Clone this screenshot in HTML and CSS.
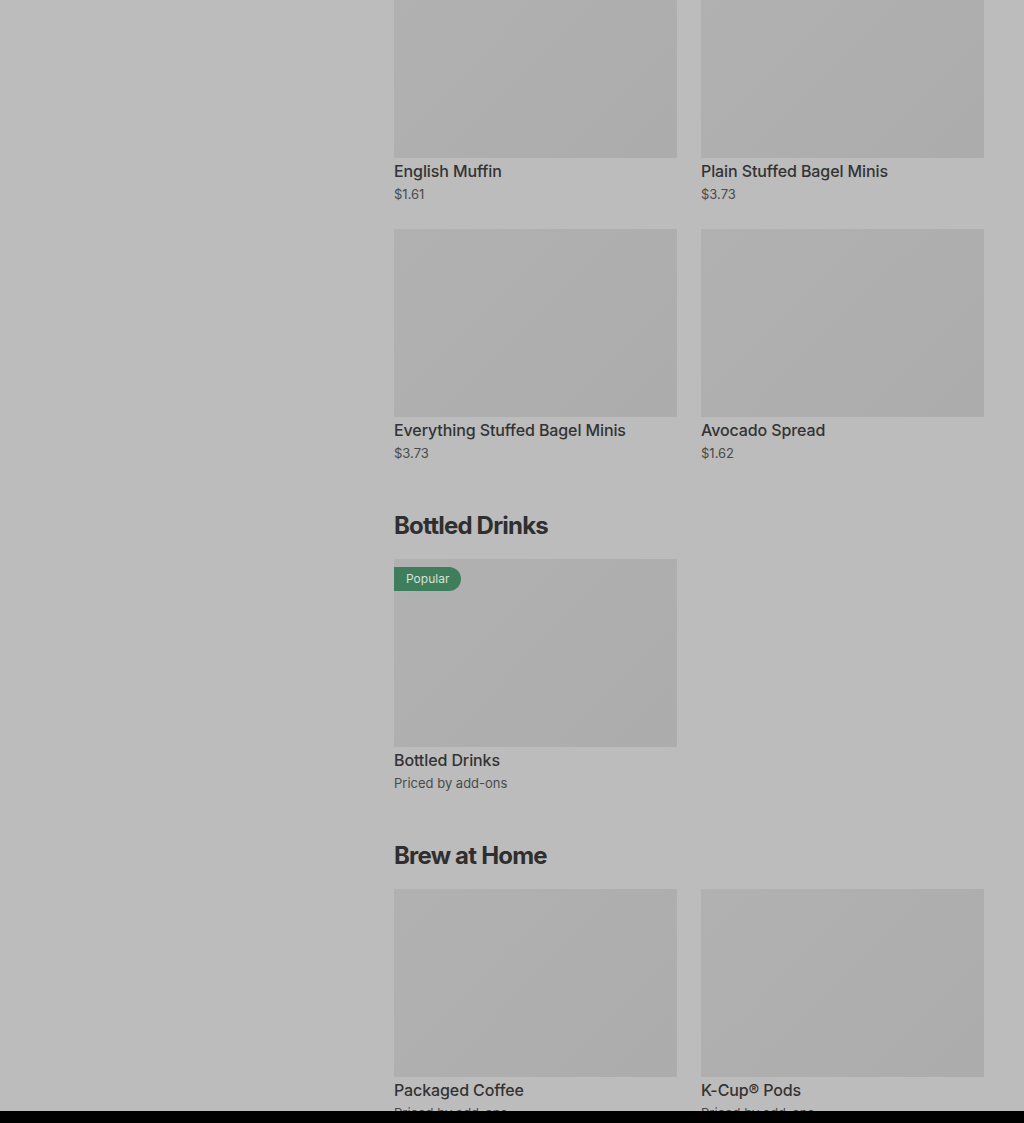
FILE: index.html
```html
<!DOCTYPE html>
<html lang="en">
<head>
<meta charset="utf-8">
<title>Menu</title>
<link rel="stylesheet" href="styles.css">
</head>
<body>
<main class="menu">
  <section class="section first">
    <div class="grid">
      <article class="card"><div class="thumb"></div><h3 class="name">English Muffin</h3><p class="price">$1.61</p></article>
      <article class="card"><div class="thumb"></div><h3 class="name">Plain Stuffed Bagel Minis</h3><p class="price">$3.73</p></article>
      <article class="card"><div class="thumb"></div><h3 class="name">Everything Stuffed Bagel Minis</h3><p class="price">$3.73</p></article>
      <article class="card"><div class="thumb"></div><h3 class="name">Avocado Spread</h3><p class="price">$1.62</p></article>
    </div>
  </section>
  <section class="section">
    <h2 class="heading">Bottled Drinks</h2>
    <div class="grid">
      <article class="card"><div class="thumb"><span class="badge">Popular</span></div><h3 class="name">Bottled Drinks</h3><p class="price">Priced by add-ons</p></article>
    </div>
  </section>
  <section class="section">
    <h2 class="heading">Brew at Home</h2>
    <div class="grid">
      <article class="card"><div class="thumb"></div><h3 class="name">Packaged Coffee</h3><p class="price">Priced by add-ons</p></article>
      <article class="card"><div class="thumb"></div><h3 class="name">K-Cup® Pods</h3><p class="price">Priced by add-ons</p></article>
    </div>
  </section>
</main>
<div class="bottom-bar"></div>
</body>
</html>
```
FILE: styles.css
```css
html, body {
  margin: 0;
  padding: 0;
  background: #bcbcbc;
  overflow: hidden;
  height: 1123px;
}
body {
  font-family: Inter, "Noto Sans", "Liberation Sans", sans-serif;
  color: #2e2e2e;
}
.menu {
  margin-left: 394px;
  width: 590px;
  margin-top: -30px;
}
.section + .section {
  margin-top: 48px;
}
.heading {
  margin: 0 0 17px;
  font-size: 24px;
  line-height: 32px;
  font-weight: 700;
  letter-spacing: -0.8px;
  color: #2f2f2f;
}
.grid {
  display: grid;
  grid-template-columns: 283px 283px;
  column-gap: 24px;
  row-gap: 26px;
}
.thumb {
  position: relative;
  height: 188px;
  background: linear-gradient(135deg, #b1b1b1 0%, #acacac 100%);
}
.name {
  margin: 3px 0 0;
  font-size: 16px;
  line-height: 20px;
  font-weight: 500;
  color: #333333;
  letter-spacing: -0.1px;
}
.price {
  margin: 4px 0 0;
  font-size: 13px;
  line-height: 18px;
  font-weight: 400;
  color: #4a4a4a;
}
.badge {
  position: absolute;
  left: 0;
  top: 8px;
  height: 24px;
  line-height: 24px;
  padding: 0 12px;
  background: #3e7e5c;
  color: #d6e2da;
  font-size: 12px;
  border-radius: 0 12px 12px 0;
}
.bottom-bar {
  position: fixed;
  left: 0;
  right: 0;
  bottom: 0;
  height: 12px;
  background: #000;
}
```
